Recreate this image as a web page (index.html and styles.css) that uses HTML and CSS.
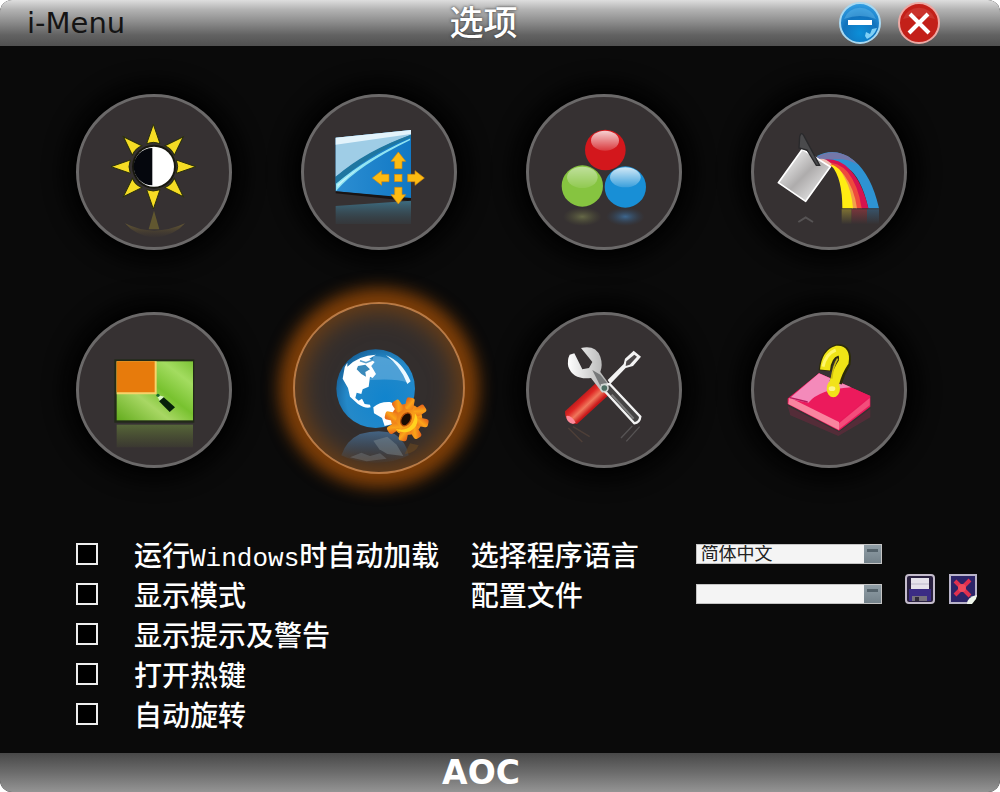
FILE: index.html
```html
<!DOCTYPE html>
<html lang="zh-CN">
<head>
  <meta charset="UTF-8" />
  <meta name="viewport" content="width=device-width, initial-scale=1.0"/>
  <title>i-Menu</title>
  <link rel="stylesheet" href="styles.css">
</head>
<body>

<div class="window">
  <header class="titlebar">
    <span class="brand">i-Menu</span>
    <h1>选项</h1>
    <div class="window-buttons">
      <button class="round" type="button" aria-label="最小化">
        <svg viewBox="0 0 42 42">
          <defs>
            <radialGradient id="minBg" cx="0.5" cy="0.75" r="0.7">
              <stop offset="0" stop-color="#0b8fd8"/>
              <stop offset="0.6" stop-color="#1273bd"/>
              <stop offset="1" stop-color="#2f9be0"/>
            </radialGradient>
          </defs>
          <circle cx="21" cy="21" r="20" fill="url(#minBg)" stroke="#a9d8f0" stroke-width="2"/>
          <path d="M5 17a17 17 0 0 1 32 0q-16-6-32 0z" fill="#6fc0ee" opacity="0.4"/>
          <rect x="9" y="18" width="24" height="5" fill="#fff"/>
          <path d="M26 34l1-4 4 2 2-5 5-1q-3 8-10 11z" fill="#7fd0f6"/>
        </svg>
      </button>
      <button class="round" type="button" aria-label="关闭">
        <svg viewBox="0 0 42 42">
          <circle cx="21" cy="21" r="20" fill="#c32019" stroke="#eda9a4" stroke-width="2"/>
          <path d="M5 17a17 17 0 0 1 32 0q-16-5-32 0z" fill="#d8524a" opacity="0.4"/>
          <path d="M12 12l19 19M30 12l-19 19" stroke="#fff" stroke-width="4"/>
        </svg>
      </button>
    </div>
  </header>

  <main>
    <nav class="menu">
      <!-- brightness -->
      <button class="item" type="button" aria-label="亮度">
        <svg viewBox="54 51 450 450">
          <defs>
            <linearGradient id="sunFade" x1="0" y1="0" x2="0" y2="1">
              <stop offset="0" stop-color="#7a6a34" stop-opacity="0.7"/>
              <stop offset="1" stop-color="#5a4a2c" stop-opacity="0"/>
            </linearGradient>
            <path id="spike" d="M277 133l20 58q-20-8-40 0z"/>
          </defs>
          <g fill="#f5dc24" stroke="#2a300a" stroke-width="3">
            <use href="#spike"/>
            <use href="#spike" transform="rotate(45 277 260)"/>
            <use href="#spike" transform="rotate(90 277 260)"/>
            <use href="#spike" transform="rotate(135 277 260)"/>
            <use href="#spike" transform="rotate(180 277 260)"/>
            <use href="#spike" transform="rotate(225 277 260)"/>
            <use href="#spike" transform="rotate(270 277 260)"/>
            <use href="#spike" transform="rotate(315 277 260)"/>
          </g>
          <circle cx="279" cy="260" r="66" fill="#18180f"/>
          <circle cx="279" cy="260" r="60" fill="#fff"/>
          <path d="M274 204a56 56 0 0 0 0 112z" fill="#05070d"/>
          <path d="M279 392l16 56h-32z" fill="#6d6130" opacity="0.8"/>
          <path d="M192 430q86 44 180 0q-30 36-92 44q-58-8-88-44z" fill="url(#sunFade)"/>
        </svg>
      </button>

      <!-- image position -->
      <button class="item" type="button" aria-label="图像位置">
        <svg viewBox="45 51 450 450">
          <defs>
            <linearGradient id="screen" x1="0" y1="0" x2="1" y2="0">
              <stop offset="0" stop-color="#2c8ed2"/>
              <stop offset="1" stop-color="#1178c4"/>
            </linearGradient>
            <linearGradient id="screenFade" x1="0" y1="0" x2="0" y2="1">
              <stop offset="0" stop-color="#3f7c96" stop-opacity="0.8"/>
              <stop offset="1" stop-color="#33505c" stop-opacity="0.2"/>
            </linearGradient>
            <path id="arrow" d="M328 216l22 28h-11v22h-22v-22h-11z"/>
          </defs>
          <path d="M140 173l226-23v206l-226-22z" fill="url(#screen)"/>
          <path d="M140 173l226-23v14q-126 46-226 126z" fill="#9fcde6"/>
          <path d="M140 173l226-23v12l-226 32z" fill="#e3f3fb"/>
          <path d="M140 290q90-78 226-126v8q-130 52-226 142z" fill="#1f76a0"/>
          <path d="M143 328q64-74 220-150q-130 58-220 134z" fill="#c4f4fa" stroke="#8fe4f2" stroke-width="4"/>
          <path d="M140 334l226 20v10l-226-24z" fill="#1a1413"/>
          <path d="M140 378l226-16v70h-226z" fill="url(#screenFade)"/>
          <g fill="#fdbb11" stroke="#d88a0c" stroke-width="2">
            <use href="#arrow"/>
            <use href="#arrow" transform="rotate(90 328 294)"/>
            <use href="#arrow" transform="rotate(180 328 294)"/>
            <use href="#arrow" transform="rotate(270 328 294)"/>
            <rect x="317" y="283" width="22" height="22"/>
          </g>
        </svg>
      </button>

      <!-- colour temperature -->
      <button class="item" type="button" aria-label="色温">
        <svg viewBox="60 51 450 450">
          <defs>
            <linearGradient id="gloss" x1="0" y1="0" x2="0" y2="1">
              <stop offset="0" stop-color="#fff" stop-opacity="0.8"/>
              <stop offset="1" stop-color="#fff" stop-opacity="0.15"/>
            </linearGradient>
            <radialGradient id="greenFade">
              <stop offset="0" stop-color="#7a8050" stop-opacity="0.7"/>
              <stop offset="1" stop-color="#5c6038" stop-opacity="0"/>
            </radialGradient>
            <radialGradient id="blueFade">
              <stop offset="0" stop-color="#3f74a6" stop-opacity="0.8"/>
              <stop offset="1" stop-color="#2c4a68" stop-opacity="0"/>
            </radialGradient>
          </defs>
          <circle cx="289" cy="210" r="61" fill="#d3171c"/>
          <ellipse cx="288" cy="182" rx="42" ry="30" fill="url(#gloss)"/>
          <circle cx="220" cy="318" r="62" fill="#86c440"/>
          <ellipse cx="220" cy="292" rx="46" ry="32" fill="url(#gloss)" opacity="0.6"/>
          <circle cx="349" cy="321" r="62" fill="#188fd6"/>
          <ellipse cx="349" cy="292" rx="46" ry="30" fill="url(#gloss)"/>
          <ellipse cx="220" cy="410" rx="58" ry="28" fill="url(#greenFade)"/>
          <ellipse cx="349" cy="410" rx="58" ry="28" fill="url(#blueFade)"/>
        </svg>
      </button>

      <!-- colour boost -->
      <button class="item" type="button" aria-label="色彩增强">
        <svg viewBox="57 51 450 450">
          <defs>
            <linearGradient id="can" x1="0" y1="0" x2="1" y2="1">
              <stop offset="0.1" stop-color="#f4f4f4"/>
              <stop offset="0.5" stop-color="#aeacac"/>
              <stop offset="0.9" stop-color="#ececec"/>
            </linearGradient>
            <linearGradient id="pourFade" x1="0" y1="0" x2="0" y2="1">
              <stop offset="0" stop-color="#363132" stop-opacity="0.3"/>
              <stop offset="1" stop-color="#363132"/>
            </linearGradient>
          </defs>
          <path d="M246 228q56-30 112 14q52 44 74 143h-32q-22-96-62-120q-46-26-84-18z" fill="#2e93d2"/>
          <path d="M246 230q44-26 92-2q16 10 30 26q-30-18-62-16q-30-4-58 4z" fill="#7377a9"/>
          <path d="M256 240q50-10 86 26q40 40 58 119h-22q-20-94-64-124q-24-16-54-12z" fill="#d6134f"/>
          <path d="M262 246q48-2 76 30q32 40 42 109h-16q-18-84-50-110q-24-24-52-22z" fill="#ee4a3c"/>
          <path d="M262 248q42 2 66 38q30 40 38 99h-14q-14-84-42-110q-20-22-46-20z" fill="#f3a04a"/>
          <path d="M284 252q30 6 46 44q20 36 24 89h-32q0-90-32-128z" fill="#ffec12"/>
          <path d="M248 238q22-6 42 14l-12 12q-20-6-30-6z" fill="#ecbdb0"/>
          <path d="M202 208l84 52-74 104-82-56z" fill="url(#can)" stroke="#fff" stroke-width="5" stroke-linejoin="round"/>
          <path d="M192 204l2-34q4-16 12-4l48 90h-10l-28-46z" fill="#4a4a4c" stroke="#29292b" stroke-width="4"/>
          <path d="M320 388h30v44h-30z" fill="#9a8b34"/>
          <path d="M350 388h46v44h-46z" fill="#94383f"/>
          <path d="M396 388h36v44h-36z" fill="#38607f"/>
          <path d="M318 387h116v46h-116z" fill="url(#pourFade)"/>
          <path d="M190 426l22-14 22 14" fill="none" stroke="#888" stroke-width="6" opacity="0.4"/>
        </svg>
      </button>

      <!-- screen split -->
      <button class="item" type="button" aria-label="窗口增亮">
        <svg viewBox="54 45 450 450">
          <defs>
            <linearGradient id="field" x1="0" y1="1" x2="1" y2="0">
              <stop offset="0" stop-color="#63ac1d"/>
              <stop offset="0.35" stop-color="#a8d764"/>
              <stop offset="0.55" stop-color="#78c22f"/>
              <stop offset="0.8" stop-color="#a3dc60"/>
              <stop offset="1" stop-color="#7cc336"/>
            </linearGradient>
            <linearGradient id="fieldFade" x1="0" y1="0" x2="0" y2="1">
              <stop offset="0" stop-color="#5a6c3a" stop-opacity="0.9"/>
              <stop offset="1" stop-color="#55622f" stop-opacity="0.15"/>
            </linearGradient>
          </defs>
          <rect x="160" y="178" width="240" height="190" fill="#222a18"/>
          <rect x="167" y="184" width="229" height="177" fill="url(#field)"/>
          <path d="M167 184h120v99h-120z" fill="#f7d36a"/>
          <path d="M167 184h114v93h-114z" fill="#e77b0c"/>
          <path d="M286 284l24 6-12 16z" fill="#d9f7c4"/>
          <circle cx="291" cy="286" r="5" fill="#1b6a2a"/>
          <path d="M308 292l34 30-16 14-32-32z" fill="#06210a"/>
          <rect x="167" y="374" width="229" height="68" fill="url(#fieldFade)"/>
        </svg>
      </button>

      <!-- options, currently open -->
      <button class="item active" type="button" aria-label="选项" aria-current="page">
        <svg viewBox="132 129 450 450">
          <defs>
            <radialGradient id="sea" cx="0.62" cy="0.62" r="0.7">
              <stop offset="0" stop-color="#1184cd"/>
              <stop offset="0.7" stop-color="#2489c9"/>
              <stop offset="1" stop-color="#155c92"/>
            </radialGradient>
            <linearGradient id="cog" x1="0" y1="0" x2="1" y2="0.8">
              <stop offset="0" stop-color="#e0571a"/>
              <stop offset="0.6" stop-color="#fba419"/>
              <stop offset="1" stop-color="#f07f1a"/>
            </linearGradient>
            <linearGradient id="globeFade" x1="0" y1="0" x2="0" y2="1">
              <stop offset="0" stop-color="#45698c" stop-opacity="0.9"/>
              <stop offset="1" stop-color="#45566a" stop-opacity="0.1"/>
            </linearGradient>
            <rect id="tooth" x="427" y="382" width="25" height="36" rx="8"/>
          </defs>
          <circle cx="347" cy="356" r="118" fill="url(#sea)"/>
          <path d="M340 258q74-2 104 80q-36-14-114-8z" fill="#75b4e0" opacity="0.55"/>
          <path d="M378 256q48 18 74 78l-10 8q-22-56-64-86z" fill="#eef9ff"/>
          <path d="M262 290q34-34 86-36l-20 12 16 10-10 12 14 24-10 12-8-4-4 30-18 8-4 14-14-4-4 16 10 8 10-6 8 16 16 2 2 8q-18 4-38-10l-24-22-6-26-16-28 4-22q0-14 10-26z" fill="#fff"/>
          <path d="M294 288l22-4 14 14-14 8 2 14-14-8-14-14z" fill="#3a8abb"/>
          <path d="M300 272l18 6 20-8" fill="none" stroke="#5ba0cc" stroke-width="5"/>
          <path d="M340 412q20-18 50-16l32 14-16 50-32 8-8-24-24-14z" fill="#fff"/>
          <path d="M244 556q14-44 56-64q60-16 104 0q34 22 42 64q-40 22-100 22t-102-22z" fill="url(#globeFade)"/>
          <path d="M340 512l42-12 28 24 20 34-48-6-24-14z" fill="#8a959c" opacity="0.4"/>
          <path d="M270 562l34-14 26 10 30-8 20 16-60 8z" fill="#8a959c" opacity="0.3"/>
          <path d="M434 552q32-2 42-26l-26-6z" fill="#704b20" opacity="0.5"/>
          <g fill="url(#cog)" transform="rotate(12 440 448)">
            <circle cx="440" cy="448" r="47"/>
            <use href="#tooth"/>
            <use href="#tooth" transform="rotate(45 440 448)"/>
            <use href="#tooth" transform="rotate(90 440 448)"/>
            <use href="#tooth" transform="rotate(135 440 448)"/>
            <use href="#tooth" transform="rotate(180 440 448)"/>
            <use href="#tooth" transform="rotate(225 440 448)"/>
            <use href="#tooth" transform="rotate(270 440 448)"/>
            <use href="#tooth" transform="rotate(315 440 448)"/>
          </g>
          <path d="M466 430q18 34-16 54q-26 8-44-8q54 14 60-46z" fill="#ffd21f"/>
          <ellipse cx="438" cy="448" rx="14" ry="21" transform="rotate(30 438 448)" fill="#1c0c02" stroke="#b54c0c" stroke-width="4"/>
        </svg>
      </button>

      <!-- tools -->
      <button class="item" type="button" aria-label="额外">
        <svg viewBox="60 45 450 450">
          <defs>
            <linearGradient id="grip" x1="0" y1="0" x2="1" y2="1">
              <stop offset="0.25" stop-color="#8f1013"/>
              <stop offset="0.42" stop-color="#e02724"/>
              <stop offset="0.52" stop-color="#f0785c"/>
              <stop offset="0.62" stop-color="#c9191b"/>
              <stop offset="0.8" stop-color="#8c0f12"/>
            </linearGradient>
            <linearGradient id="jaw" x1="0" y1="0" x2="1" y2="0">
              <stop offset="0" stop-color="#fff"/>
              <stop offset="1" stop-color="#a9a9a9"/>
            </linearGradient>
          </defs>
          <path d="M296 240l48-48 4-16 26-24 22 18-24 28-22 6-46 48z" fill="#f3f3f3"/>
          <path d="M352 184l24-20 8 6-22 24-12 4z" fill="#4d494a"/>
          <path d="M260 250l38 36-94 86q-36-2-36-38z" fill="url(#grip)"/>
          <path d="M172 348q14-4 28 20l-8 4q-20-4-20-24z" fill="#ff8a9a"/>
          <path d="M216 144q44-10 58 26q8 24 0 46l32 44-26 18-34-44q-54 6-68-34q-4-20 4-36l14-4 24 48 20-4 10-18z" fill="url(#jaw)"/>
          <path d="M250 210l24 14 22 28-18 14z" fill="#77797a"/>
          <path d="M280 256l22-4 92 98q-2 18-18 20l-88-96z" fill="#454444" stroke="#f2f2f2" stroke-width="7"/>
          <path d="M308 284l66 72" stroke="#7d7d7d" stroke-width="6"/>
          <circle cx="286" cy="264" r="11" fill="#4c6e63" stroke="#cfd6d3" stroke-width="5"/>
          <path d="M336 414l34-36M352 424l40-44" stroke="#888" stroke-width="4" opacity="0.4"/>
          <path d="M178 384l42 42M192 380l50 30" stroke="#7a5a45" stroke-width="4" opacity="0.35"/>
        </svg>
      </button>

      <!-- help -->
      <button class="item" type="button" aria-label="帮助">
        <svg viewBox="57 45 450 450">
          <path d="M158 318l154 78 94-70v26l-96 56-144-62z" fill="#7b2740" opacity="0.45"/>
          <path d="M158 296l94-76 154 68v32l-94 72-154-80z" fill="#e8185a"/>
          <path d="M158 296l94-76 154 68-94 78z" fill="#ec1a5c"/>
          <path d="M162 296l90-76 96 42q-94 6-128 46z" fill="#f48aba"/>
          <path d="M162 292l150 74v24l-152-78z" fill="#f9849f"/>
          <path d="M312 370l92-76v22l-92 72z" fill="#f34d7b"/>
          <path d="M162 292l56 14" stroke="#b5195a" stroke-width="4"/>
          <path d="M270 212q4-50 38-60q26-2 20 36q-16 26-26 60" fill="none" stroke="#2c2b0a" stroke-width="38"/>
          <path d="M270 210q4-48 36-58q26-2 20 34q-18 26-28 62" fill="none" stroke="#f0e416" stroke-width="30"/>
          <path d="M264 200q8-38 38-50" fill="none" stroke="#fff76a" stroke-width="9"/>
          <path d="M308 176q-14 22-18 60" fill="none" stroke="#cdbd0e" stroke-width="5"/>
          <ellipse cx="295" cy="266" rx="20" ry="26" fill="#f2e21a"/>
          <ellipse cx="291" cy="266" rx="10" ry="7" fill="#fdf58a"/>
        </svg>
      </button>
    </nav>

    <form class="settings">
      <div class="checks">
        <label><input type="checkbox"><span>运行<span class="latin">Windows</span>时自动加载</span></label>
        <label><input type="checkbox"><span>显示模式</span></label>
        <label><input type="checkbox"><span>显示提示及警告</span></label>
        <label><input type="checkbox"><span>打开热键</span></label>
        <label><input type="checkbox"><span>自动旋转</span></label>
      </div>

      <div class="fields">
        <div class="field">
          <label for="language">选择程序语言</label>
          <select id="language">
            <option>简体中文</option>
          </select>
        </div>
        <div class="field">
          <label for="profile">配置文件</label>
          <select id="profile">
            <option></option>
          </select>
          <div class="file-buttons">
            <button type="button" aria-label="保存">
              <svg viewBox="0 0 30 30">
                <rect x="1" y="1" width="28" height="28" rx="3" fill="#2a2140" stroke="#c4bccb" stroke-width="2"/>
                <rect x="4" y="15" width="22" height="12" fill="#3b2c84"/>
                <rect x="6" y="4" width="18" height="11" fill="#e6e3ec"/>
                <path d="M6 10h18" stroke="#bdb8cc"/>
                <rect x="7" y="22" width="15" height="5" fill="#77717d"/>
                <rect x="10" y="23" width="4" height="4" fill="#2f2b38"/>
              </svg>
            </button>
            <button type="button" aria-label="删除">
              <svg viewBox="0 0 30 30">
                <path d="M2 1h26v21l-8 7H2z" fill="#2c2468" stroke="#b9b4c9" stroke-width="2"/>
                <path d="M29 21l-1 4-4 5h-5q0-7 10-9z" fill="#eef5ea"/>
                <path d="M7 7l15 15M22 6L7 21" stroke="#e0304f" stroke-width="4"/>
                <circle cx="14" cy="14" r="4" fill="#f04a5c"/>
              </svg>
            </button>
          </div>
        </div>
      </div>
    </form>
  </main>

  <footer>
    <span class="logo">AOC</span>
  </footer>
</div>

</body>
</html>
```

FILE: styles.css
```css
* {
  box-sizing: border-box;
}

body {
  margin: 0;
  background: #fff;
  color: #fff;
  font-family: "Noto Sans CJK SC", sans-serif;
}

button {
  padding: 0;
  border: none;
  background: none;
  cursor: pointer;
}

svg {
  display: block;
}

.window {
  display: flex;
  flex-direction: column;
  min-height: 100vh;
  border-radius: 12px;
  background: #0a0a0a;
  overflow: hidden;
}

/* Title bar */
.titlebar {
  display: grid;
  grid-template-columns: 1fr auto 1fr;
  align-items: center;
  height: 46px;
  padding: 0 60px 0 27px;
  background: linear-gradient(#dedede, #b4b4b4 20%, #8c8c8c 48%, #626262 76%, #505050);
}

.brand {
  color: #141414;
  font-family: "DejaVu Sans", sans-serif;
  font-size: 29px;
  line-height: 44px;
}

h1 {
  margin: 0;
  font-family: "Liberation Sans", "Noto Sans CJK SC", sans-serif;
  font-size: 34px;
  font-weight: 500;
  line-height: 46px;
  text-shadow: 0 0 3px #333;
}

.window-buttons {
  display: flex;
  justify-content: flex-end;
  gap: 17px;
}

.round,
.round svg {
  width: 42px;
  height: 42px;
}

/* Round menu */
main {
  flex: 1;
}

.menu {
  display: grid;
  grid-template-columns: repeat(4, 1fr);
  gap: 62px 0;
  justify-items: center;
  padding: 48px 58px 0 41px;
}

.item {
  display: flex;
  align-items: center;
  justify-content: center;
  width: 156px;
  height: 156px;
  border: 3px solid #6b6969;
  border-radius: 50%;
  background: #363132;
  box-shadow: 0 0 20px 12px #020202;
}

.item svg {
  flex: none;
  width: 150px;
  height: 150px;
}

.item.active {
  width: 172px;
  height: 172px;
  margin: -10px 0 -6px;
  border: 2px solid #b97a45;
  background: #332e2d;
  box-shadow: 0 0 16px 14px #7d3e08, inset 0 0 24px 6px #6e3f14;
}

/* Settings */
.settings {
  display: grid;
  grid-template-columns: 7fr 9fr;
  padding: 66px 22px 18px 76px;
  font-size: 28px;
  font-weight: 500;
  line-height: 40px;
}

.checks label {
  display: flex;
  align-items: center;
  height: 40px;
  white-space: nowrap;
}

.checks input {
  appearance: none;
  width: 22px;
  height: 22px;
  margin: 0 36px 0 0;
  border: 2px solid #eee;
  background: #000;
}

.checks input:checked {
  background: #eee;
}

.latin {
  font-family: "Liberation Mono", monospace;
  font-size: 26px;
  line-height: 1;
}

.field {
  display: grid;
  grid-template-columns: 225px 1fr 96px;
  align-items: center;
  height: 40px;
}

select {
  appearance: none;
  width: 100%;
  height: 20px;
  padding: 0 20px 0 4px;
  border: 1px solid #c4c4c4;
  border-radius: 0;
  background: linear-gradient(#56646c, #56646c) right 3px top 4px / 11px 3px no-repeat,
    linear-gradient(#909ea6, #74828a) right / 17px 100% no-repeat, #f4f4f4;
  color: #222;
  font-family: "Liberation Sans", "Noto Sans CJK SC", sans-serif;
  font-size: 18px;
  line-height: 18px;
}

.file-buttons {
  display: flex;
  align-self: start;
  justify-content: space-between;
  padding-left: 23px;
}

.file-buttons svg {
  width: 30px;
  height: 30px;
}

/* Footer */
footer {
  display: flex;
  align-items: center;
  justify-content: center;
  height: 39px;
  padding-right: 38px;
  background: linear-gradient(#484848, #6c6c6c 50%, #949494);
}

.logo {
  font-family: "DejaVu Sans", sans-serif;
  font-size: 33px;
  font-weight: bold;
  line-height: 39px;
}
```
